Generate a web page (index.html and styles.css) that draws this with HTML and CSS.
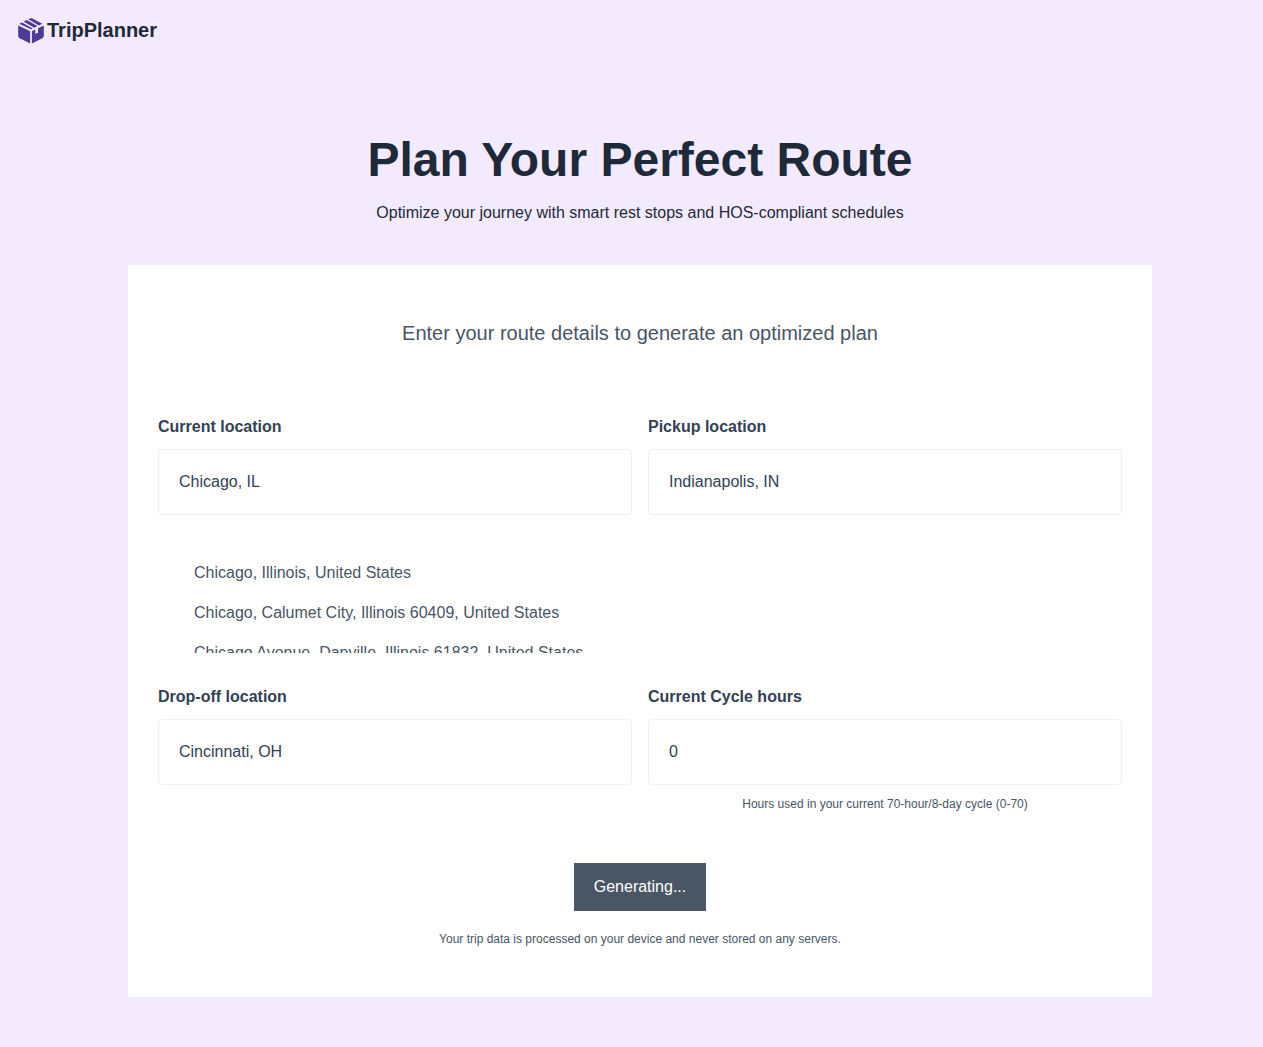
FILE: index.html
```html
<!DOCTYPE html>
<html lang="en">
<head>
  <meta charset="utf-8">
  <meta name="viewport" content="width=device-width, initial-scale=1">
  <title>TripPlanner</title>
  <link rel="stylesheet" href="styles.css">
</head>
<body>
  <header class="topbar">
    <a class="brand" href="#">
      <svg class="brand-icon" viewBox="0 0 26 28" aria-hidden="true">
        <path d="M10.4 3.2 12.2 2.3Q13 2 13.8 2.3L24.4 7.7 20.9 9.4Z"/>
        <path d="M5.6 5.6 8.8 4 19.4 10.1 16.2 11.7Z"/>
        <path d="M1.2 7.8 4 6.4 14.7 12.4 13 13.3Z"/>
        <path d="M.2 9.4 12.1 15.2V27.4L1.7 22.2Q.2 21.4.2 20Z"/>
        <path d="M13.9 15.2 17.3 13.5V18.2L18.6 16.9 20 17.1V12.2L25.8 9.4V20Q25.8 21.4 24.3 22.2L13.9 27.4Z"/>
      </svg>
      <span>TripPlanner</span>
    </a>
  </header>

  <main class="page">
    <div class="intro">
      <h1 class="title">Plan Your Perfect Route</h1>
      <p class="tagline">Optimize your journey with smart rest stops and HOS-compliant schedules</p>
    </div>

    <form class="card">
      <p class="card-lead">Enter your route details to generate an optimized plan</p>

      <div class="fields">
        <div class="field">
          <label class="label" for="current">Current location</label>
          <input class="input" id="current" type="text" value="Chicago, IL">
          <ul class="suggestions">
            <li class="suggestion">Chicago, Illinois, United States</li>
            <li class="suggestion">Chicago, Calumet City, Illinois 60409, United States</li>
            <li class="suggestion">Chicago Avenue, Danville, Illinois 61832, United States</li>
          </ul>
        </div>
        <div class="field">
          <label class="label" for="pickup">Pickup location</label>
          <input class="input" id="pickup" type="text" value="Indianapolis, IN">
        </div>
        <div class="field">
          <label class="label" for="dropoff">Drop-off location</label>
          <input class="input" id="dropoff" type="text" value="Cincinnati, OH">
        </div>
        <div class="field">
          <label class="label" for="cycle">Current Cycle hours</label>
          <input class="input" id="cycle" type="number" min="0" max="70" value="0" aria-describedby="cycle-hint">
          <p class="note" id="cycle-hint">Hours used in your current 70-hour/8-day cycle (0-70)</p>
        </div>
      </div>

      <div class="actions">
        <button class="submit" type="submit">Generating...</button>
        <p class="note">Your trip data is processed on your device and never stored on any servers.</p>
      </div>
    </form>
  </main>
</body>
</html>
```
FILE: styles.css
```css
* {
  box-sizing: border-box;
  margin: 0;
  padding: 0;
}

body {
  background: #f3eafd;
  color: #1e2939;
  font-family: "Liberation Sans", Arial, sans-serif;
  font-size: 16px;
  line-height: 24px;
}

.topbar {
  display: flex;
  padding: 16px 18px;
}

.brand {
  display: flex;
  align-items: center;
  gap: 3px;
  color: #1e2939;
  font-size: 20px;
  font-weight: 700;
  line-height: 28px;
  text-decoration: none;
}

.brand-icon {
  width: 26px;
  height: 28px;
  fill: #4c3a99;
}

.page {
  padding: 76px 111px 50px 128px;
}

.intro {
  display: flex;
  flex-direction: column;
  gap: 17px;
  margin-bottom: 40px;
  text-align: center;
}

.title {
  font-size: 48px;
  line-height: 48px;
}

.card {
  padding: 54px 30px 50px;
  background: #fff;
}

.card-lead {
  margin-bottom: 68px;
  color: #4a5565;
  font-size: 20px;
  line-height: 28px;
  text-align: center;
}

.fields {
  display: grid;
  grid-template-columns: repeat(2, minmax(0, 1fr));
  gap: 32px 16px;
}

.field {
  display: flex;
  flex-direction: column;
}

.label {
  margin-bottom: 10px;
  color: #334155;
  font-weight: 700;
}

.input {
  width: 100%;
  height: 66px;
  padding: 0 20px;
  border: 1px solid #f3eafd;
  border-radius: 4px;
  background: #fff;
  color: #334155;
  font: inherit;
  appearance: textfield;
}

.input::-webkit-inner-spin-button {
  display: none;
}

.suggestions {
  max-height: 128px;
  margin-top: 10px;
  padding: 28px 20px 0;
  overflow: hidden;
  list-style: none;
}

.suggestion {
  padding: 8px 16px;
  color: #4a5565;
}

.note {
  color: #4a5565;
  font-size: 12px;
  line-height: 16px;
  text-align: center;
}

.field .note {
  margin-top: 11px;
}

.actions {
  display: flex;
  flex-direction: column;
  align-items: center;
  gap: 20px;
  margin-top: 51px;
}

.submit {
  height: 48px;
  padding: 0 20px;
  border: 0;
  background: #4a5565;
  color: #fff;
  font: inherit;
}
```
